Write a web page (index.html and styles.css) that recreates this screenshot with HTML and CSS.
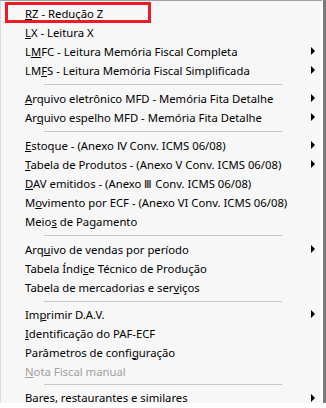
FILE: index.html
```html
<!DOCTYPE html>
<html lang="pt-BR">
<head>
    <meta charset="UTF-8">
    <meta name="viewport" content="width=device-width, initial-scale=1.0">
    <title>Menu Fiscal</title>
    <link rel="stylesheet" href="styles.css">
</head>
<body>
    <ul class="menu">
        <li class="item"><span class="label"><u>R</u>Z - Redução Z</span></li>
        <li class="item"><span class="label"><u>L</u>X - Leitura X</span></li>
        <li class="item"><span class="label">L<u>M</u>FC - Leitura Memória Fiscal Completa</span><span class="arrow"></span></li>
        <li class="item"><span class="label">LM<u>F</u>S - Leitura Memória Fiscal Simplificada</span><span class="arrow"></span></li>
        <li class="sep"></li>
        <li class="item"><span class="label"><u>A</u>rquivo eletrônico MFD - Memória Fita Detalhe</span><span class="arrow"></span></li>
        <li class="item"><span class="label">Ar<u>q</u>uivo espelho MFD - Memória Fita Detalhe</span><span class="arrow"></span></li>
        <li class="sep"></li>
        <li class="item"><span class="label"><u>E</u>stoque - (Anexo Ⅳ Conv. ICMS 06/08)</span><span class="arrow"></span></li>
        <li class="item"><span class="label"><u>T</u>abela de Produtos - (Anexo V Conv. ICMS 06/08)</span><span class="arrow"></span></li>
        <li class="item"><span class="label"><u>D</u>AV emitidos - (Anexo Ⅲ Conv. ICMS 06/08)</span></li>
        <li class="item"><span class="label">M<u>o</u>vimento por ECF - (Anexo VI Conv. ICMS 06/08)</span></li>
        <li class="item"><span class="label">Meio<u>s</u> de Pagamento</span></li>
        <li class="sep"></li>
        <li class="item"><span class="label">Arq<u>u</u>ivo de vendas por período</span><span class="arrow"></span></li>
        <li class="item"><span class="label">Tabela Índi<u>c</u>e Técnico de Produção</span></li>
        <li class="item"><span class="label">Tabela de mercadorias e ser<u>v</u>iços</span></li>
        <li class="sep short"></li>
        <li class="item"><span class="label">Im<u>p</u>rimir D.A.V.</span><span class="arrow"></span></li>
        <li class="item"><span class="label"><u>I</u>dentificação do PAF-ECF</span></li>
        <li class="item"><span class="label">Parâmetros de confi<u>g</u>uração</span></li>
        <li class="item disabled"><span class="label"><u>N</u>ota Fiscal manual</span></li>
        <li class="sep shorter"></li>
        <li class="item last"><span class="label"><u>B</u>ares, restaurantes e similares</span><span class="arrow"></span></li>
    </ul>
    <div class="mark"></div>
</body>
</html>
```

FILE: styles.css
```css
body {
    margin: 0;
    background-color: #ffffff;
    font-family: 'Noto Sans', 'Open Sans', sans-serif;
    font-size: 11.3px;
    color: #000;
}

.menu {
    list-style: none;
    margin: 0;
    padding: 3px 0 0 0;
    width: 323px;
    box-sizing: border-box;
    background-color: #f7f7f7;
    border-top: 1px solid #a0a0a0;
    border-left: 1px solid #dcdcdc;
    border-right: 2px solid #ffffff;
    box-shadow: 3px 0 0 #7a7a7a;
}

.item {
    display: flex;
    align-items: center;
    height: 19px;
    box-sizing: border-box;
    padding: 0 6px 1px 24px;
    line-height: 13px;
    white-space: nowrap;
}

.item.last {
    height: 15px;
    padding-bottom: 0;
    align-items: flex-start;
    padding-top: 3px;
}

.label {
    flex: 1;
}

.label u {
    text-underline-offset: 1px;
}

.disabled {
    color: #a0a0a0;
}

.arrow {
    width: 0;
    height: 0;
    border-left: 4px solid #000;
    border-top: 4px solid transparent;
    border-bottom: 4px solid transparent;
}

.last .arrow {
    margin-top: 3px;
}

.sep {
    height: 9px;
    display: flex;
    align-items: center;
    padding-left: 43px;
    padding-right: 39px;
}

.sep.short {
    height: 8px;
}

.sep.shorter {
    height: 7px;
}

.sep::before {
    content: "";
    flex: 1;
    height: 1px;
    background-color: #c8c8c8;
}

/* red annotation box around the first entry */
.mark {
    position: absolute;
    left: 5px;
    top: 2px;
    width: 140px;
    height: 15px;
    border: 3px solid #ed1c24;
}
```
